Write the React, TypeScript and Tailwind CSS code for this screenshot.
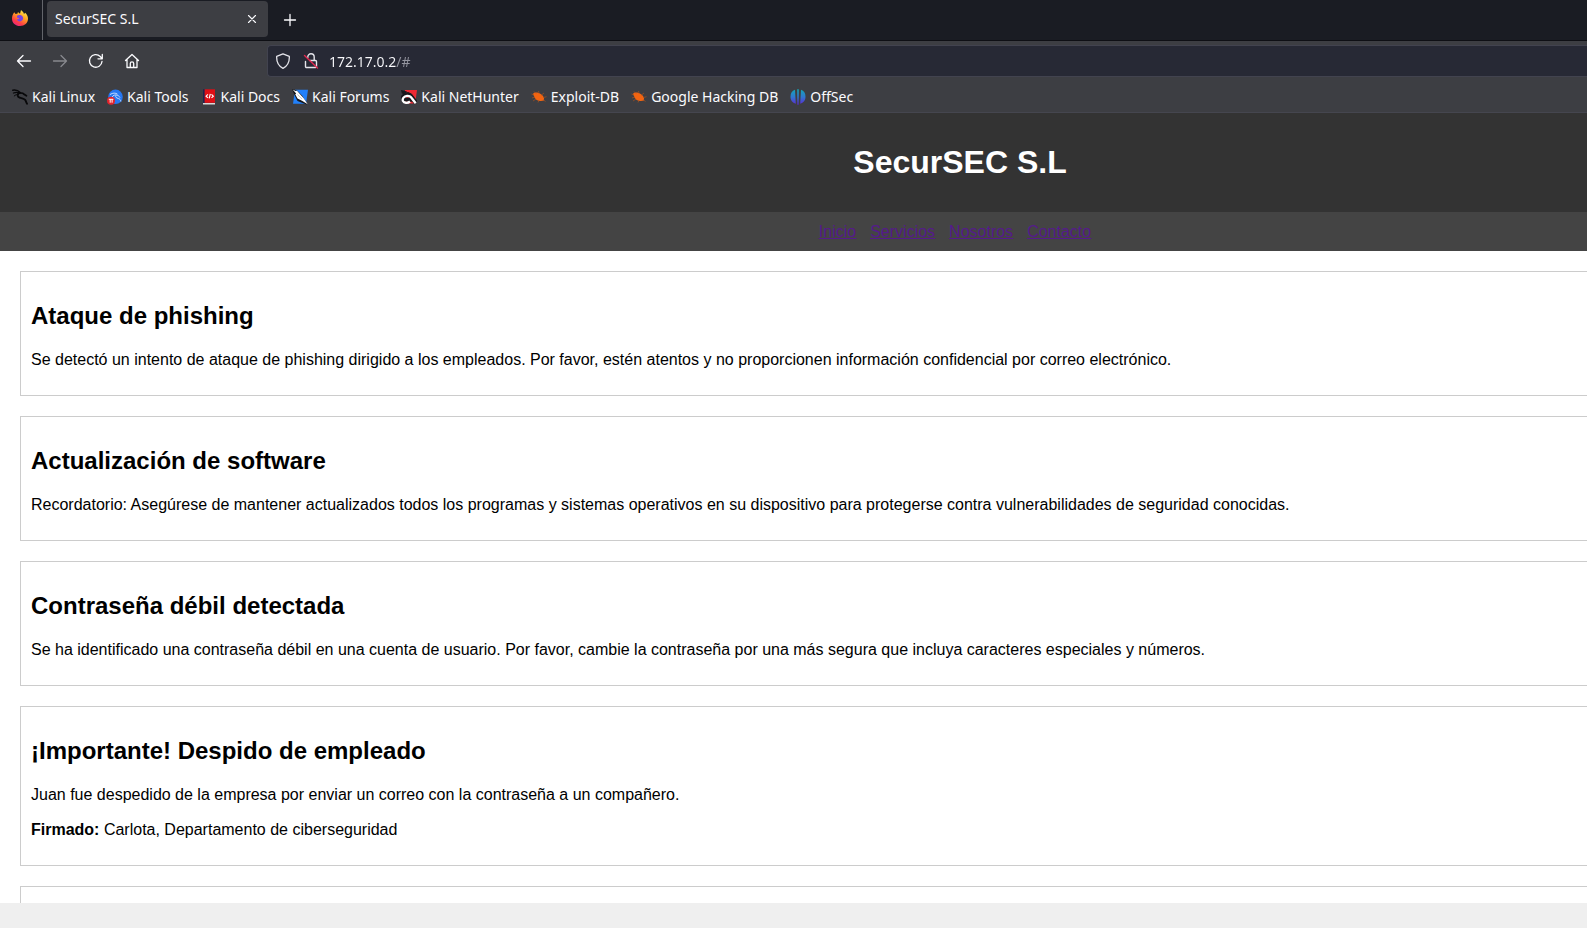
import React from "react";

function FirefoxIcon() {
  return (
    <svg width="18" height="18" viewBox="0 0 18 18">
      <defs>
        <linearGradient id="ff" x1="0.8" y1="0" x2="0.2" y2="1">
          <stop offset="0" stopColor="#fff34f" />
          <stop offset="0.4" stopColor="#ffa021" />
          <stop offset="0.75" stopColor="#ff3d46" />
          <stop offset="1" stopColor="#e5208c" />
        </linearGradient>
      </defs>
      <path d="M3.2 3.2 4.6 5l2-.4L6.9 3 9 4.8l1-3.8 2.3 2.3L13 5l1.200-1.200C16 5.500 17 7.400 17 9.800 17 14 13.500 17 9 17s-8-3-8-7.300C1 7.200 1.800 5 3.200 3.200Z" fill="url(#ff)" />
      <path d="M6 6.800c1-.9 2.500-1.200 4-.6 2 .8 2.600 2.800 1.800 4.400-.8 1.700-3 2.300-4.700 1.400-.8-.5-1.200-1.200-1.100-2 .8.4 1.800.2 2.300-.5L6 8.500Z" fill="#7543e3" />
    </svg>
  );
}

function KaliIcon() {
  return (
    <svg width="16" height="16" viewBox="0 0 16 16" fill="none" stroke="#08080a" strokeLinecap="round">
      <path d="M.7 1.200c3-.5 5.500.2 7.500 2.300" strokeWidth="1.400" />
      <path d="M1.500 4c2.500-1 4.500-.8 6.500.2" strokeWidth="1.300" />
      <path d="M2.200 7C3.500 5.700 5 5.200 6.600 5.300" strokeWidth="1" />
      <path d="M7.500 3.800C4.800 5 5 8 8 8.700c2.600.6 5 1 5.600 2.800.4 1.300.5 2 1.400 3.300" strokeWidth="1.900" />
      <path d="M8 3.900c2 0 3.500.4 4.500 1.700l1.900 1.200" strokeWidth="1.800" />
    </svg>
  );
}

function ToolsIcon() {
  return (
    <svg width="16" height="16" viewBox="0 0 16 16">
      <circle cx="8.500" cy="7.800" r="7.300" fill="#2677f2" />
      <path d="M3 5.500c3-1.800 5.500-1.800 7.500-.3M5 8c1.300-1.900 3-2.300 4.500-2 2 .5 3 1.500 3.500 2.500M9 6.200c-1 2 .5 2.800 2.300 3.300 1.700.5 2.300 1.600 2.600 3" fill="none" stroke="#c3dbff" strokeWidth="1" />
      <circle cx="4" cy="11.800" r="4" fill="#e3232c" />
      <path d="M1.800 10.300h4.600M3.200 10.300v3.400M5.100 10.300v3.400" stroke="#fff" strokeWidth="1" />
    </svg>
  );
}

function DocsIcon() {
  return (
    <svg width="16" height="16" viewBox="0 0 16 16">
      <path d="M2 .3h2v14.200H2z" fill="#1d2450" />
      <path d="M3.600.3H14v13.500H3.600z" fill="#df0f16" />
      <path d="M2 14h12v1.500H2z" fill="#d9d9d9" />
      <path d="M6.900 5.300 5.100 7.200l1.800 1.700M10.500 5.300l1.800 1.900-1.800 1.700M9.300 4.800 8.200 9.400" fill="none" stroke="#fff" strokeWidth="1.200" />
    </svg>
  );
}

function ForumsIcon() {
  return (
    <svg width="16" height="16" viewBox="0 0 16 16">
      <path d="M3 .8h13l-2 14H1Z" fill="#2180fa" />
      <path d="M0 0l5 1.500 5 5 5.500 8.500-1 .5L5.500 12 2 5Z" fill="#15171c" />
      <path d="M.6.5 3.500 2 5 1.800l3.500 4 3.200 3.500 4 6-5.700-3.500-4.500-2.300-2.300-4.300 1-.6Z" fill="#fff" />
      <path d="M5.500 5.500l4.500 4.500" stroke="#9aa6b5" strokeWidth=".6" />
    </svg>
  );
}

function NetHunterIcon() {
  return (
    <svg width="16" height="16" viewBox="0 0 16 16">
      <path d="M4 1h12l-1.800 13.500H4Z" fill="#ee2933" />
      <path d="M0 1 6 2.500 4.500 5.500.8 4.500ZM3 5l4-2 4 2 2 4-2 1-4-2Z" fill="#17181c" />
      <path d="M1 10.500C2 6 7 4.300 10 7.500l5 6.500" fill="none" stroke="#17181c" strokeWidth="4.500" />
      <path d="M2 8.800h9v4H3Z" fill="#17181c" />
      <path d="M9 12.500c-2.500 2-6 1.500-7-.5-1-2.300 1-5 4-5.200 2.500-.2 4 1 5 2.700l3.700 4.700" fill="none" stroke="#fff" strokeWidth="2.300" />
    </svg>
  );
}

function BugIcon() {
  return (
    <svg width="16" height="16" viewBox="0 0 16 16">
      <path d="M1.800 5C4 2.800 7 3.500 9.700 5c2.500 1.500 3.800 3.600 3.300 6.600-3.200 1-6.400.4-8.400-1.600C2.800 8.300 3.300 6.800 1.800 5Z" fill="#f26411" />
      <path d="M5 4.500 3 2.500M8 4.500l-.5-2.500M10.500 6l2.500-2M12.500 8.500l3-.8M4 8l-3 1M5 10l-3 2M8 11.500l-1 2M12 10.500l2.500 2M3 6 .5 5" stroke="#a5521f" strokeWidth=".7" />
    </svg>
  );
}

function OffSecIcon() {
  return (
    <svg width="16" height="16" viewBox="0 0 16 16">
      <defs>
        <linearGradient id="os" x1="0" y1="0" x2="0" y2="1">
          <stop offset="0" stopColor="#12a6b6" />
          <stop offset=".5" stopColor="#3078cf" />
          <stop offset="1" stopColor="#5b28d4" />
        </linearGradient>
      </defs>
      <path d="M5 .8 5.800 14.800C2.500 14 .5 11.300.5 7.800S2 1.800 5 .8ZM7.200.3h1.600V5L8.600 15.700H7.400L7.200 5ZM11 .8c3 1 4.500 3.500 4.500 7s-2 6.200-5.300 7Z" fill="url(#os)" />
    </svg>
  );
}

const bookmarks = [
  { label: "Kali Linux", icon: <KaliIcon /> },
  { label: "Kali Tools", icon: <ToolsIcon /> },
  { label: "Kali Docs", icon: <DocsIcon /> },
  { label: "Kali Forums", icon: <ForumsIcon /> },
  { label: "Kali NetHunter", icon: <NetHunterIcon /> },
  { label: "Exploit-DB", icon: <BugIcon /> },
  { label: "Google Hacking DB", icon: <BugIcon /> },
  { label: "OffSec", icon: <OffSecIcon /> },
];

function Stroke({ d, color = "#fbfbfe", width = "1.3" }: { d: string; color?: string; width?: string }) {
  return (
    <svg width="16" height="16" viewBox="0 0 16 16" fill="none" stroke={color} strokeWidth={width} strokeLinecap="round" strokeLinejoin="round">
      <path d={d} />
    </svg>
  );
}

function TabStrip() {
  return (
    <div className="flex h-[41px] border-b border-[#0e0f14] bg-[#1a1c23]">
      <button aria-label="Firefox" className="flex w-[43px] items-center justify-center border-r border-[#63656b] pr-[2px] pb-1">
        <FirefoxIcon />
      </button>
      <div className="mt-px ml-1 flex h-9 w-[221px] items-center justify-between rounded bg-[#3d3e43] px-2 text-sm text-[#fbfbfe]">
        <span>SecurSEC S.L</span>
        <button aria-label="Cerrar pestaña">
          <Stroke d="M4.500 4.500l7 7M11.500 4.500l-7 7" width="1.1" />
        </button>
      </div>
      <button aria-label="Nueva pestaña" className="ml-3 flex h-10 w-5 items-center justify-center">
        <Stroke d="M8 2.500v11M2.500 8h11" />
      </button>
    </div>
  );
}

function Toolbar() {
  return (
    <div className="flex h-10 items-center">
      <div className="flex w-[267px] shrink-0 items-center gap-5 pl-4">
        <button aria-label="Atrás"><Stroke d="M14.500 8h-13M7 2.500 1.500 8 7 13.500" /></button>
        <button aria-label="Adelante"><Stroke d="M1.500 8h13M9 2.500 14.500 8 9 13.500" color="#88898e" /></button>
        <button aria-label="Recargar"><Stroke d="M14 8.500a6.300 6.300 0 1 1-1.800-5L14 5.500M14.300 1.500v4.300H10" /></button>
        <button aria-label="Inicio"><Stroke d="M1.500 7.500 8 1.500l6.500 6M3 6.500v8h10v-8M6.300 14.500V10.500a1.700 1.700 0 0 1 3.400 0v4" /></button>
      </div>
      <div className="flex h-8 grow items-center gap-3 rounded-l border-y border-l border-[#42434f] bg-[#272935] pl-[7px]">
        <Stroke d="M8 .9 14.300 3.300c.3 5-1.300 9.400-6.300 12C3 12.700 1.400 8.300 1.700 3.300Z" color="#e4e4ea" />
        <svg width="16" height="16" viewBox="0 0 16 16" fill="none" strokeWidth="1.400" strokeLinecap="round">
          <path d="M4.800 4.500V4a3.200 3.200 0 0 1 6.400 0v3M7 7.500h5.500a1 1 0 0 1 1 1v5a1 1 0 0 1-1 1h-9a1 1 0 0 1-1-1V8.500" stroke="#e4e4ea" />
          <path d="M1.500 2.500l13 12.500" stroke="#e22850" />
        </svg>
        <input
          aria-label="Dirección"
          defaultValue="172.17.0.2/#"
          className="-ml-0.5 h-7 grow bg-[linear-gradient(90deg,#fbfbfe_67px,#94959f_67px)] bg-clip-text text-sm text-transparent outline-none"
        />
      </div>
    </div>
  );
}

function Bookmarks() {
  return (
    <nav aria-label="Marcadores" className="flex h-8 items-center gap-3 border-b border-[#45464f] pl-3 text-sm text-[#fbfbfe]">
      {bookmarks.map((b) => (
        <a key={b.label} href="#" className="flex items-center gap-1 whitespace-nowrap">
          {b.icon}
          {b.label}
        </a>
      ))}
    </nav>
  );
}

function Notice({ title, children }: { title?: string; children?: React.ReactNode }) {
  return (
    <section className="mb-5 min-h-[125px] border border-[#ccc] px-[10px] pt-[30px] pb-[26px]">
      {title && <h2 className="mb-5 text-2xl leading-7 font-bold">{title}</h2>}
      <div className="flex flex-col gap-4 leading-[19px]">{children}</div>
    </section>
  );
}

export default function App() {
  return (
    <div className="flex h-screen flex-col overflow-hidden bg-[#efefef]">
      <header className="shrink-0 bg-[#3d3e43] font-['Noto_Sans',sans-serif]">
        <TabStrip />
        <Toolbar />
        <Bookmarks />
      </header>
      <main className="mb-[25px] min-h-0 grow overflow-hidden bg-white font-['Liberation_Sans',Arial,sans-serif] text-base text-black">
        <div className="min-w-[1920px]">
          <div className="bg-[#333] py-[31px] text-center">
            <h1 className="text-[32px] leading-[37px] font-bold text-white">SecurSEC S.L</h1>
          </div>
          <nav className="flex justify-center gap-[14px] bg-[#444] py-[10px] pr-[10px] leading-[19px] text-[#551a8b] underline">
            <a href="#">Inicio</a>
            <a href="#">Servicios</a>
            <a href="#">Nosotros</a>
            <a href="#">Contacto</a>
          </nav>
          <div className="p-5">
            <Notice title="Ataque de phishing">
              <p>Se detectó un intento de ataque de phishing dirigido a los empleados. Por favor, estén atentos y no proporcionen información confidencial por correo electrónico.</p>
            </Notice>
            <Notice title="Actualización de software">
              <p>Recordatorio: Asegúrese de mantener actualizados todos los programas y sistemas operativos en su dispositivo para protegerse contra vulnerabilidades de seguridad conocidas.</p>
            </Notice>
            <Notice title="Contraseña débil detectada">
              <p>Se ha identificado una contraseña débil en una cuenta de usuario. Por favor, cambie la contraseña por una más segura que incluya caracteres especiales y números.</p>
            </Notice>
            <Notice title="¡Importante! Despido de empleado">
              <p>Juan fue despedido de la empresa por enviar un correo con la contraseña a un compañero.</p>
              <p><strong>Firmado:</strong> Carlota, Departamento de ciberseguridad</p>
            </Notice>
            <Notice />
          </div>
        </div>
      </main>
    </div>
  );
}
